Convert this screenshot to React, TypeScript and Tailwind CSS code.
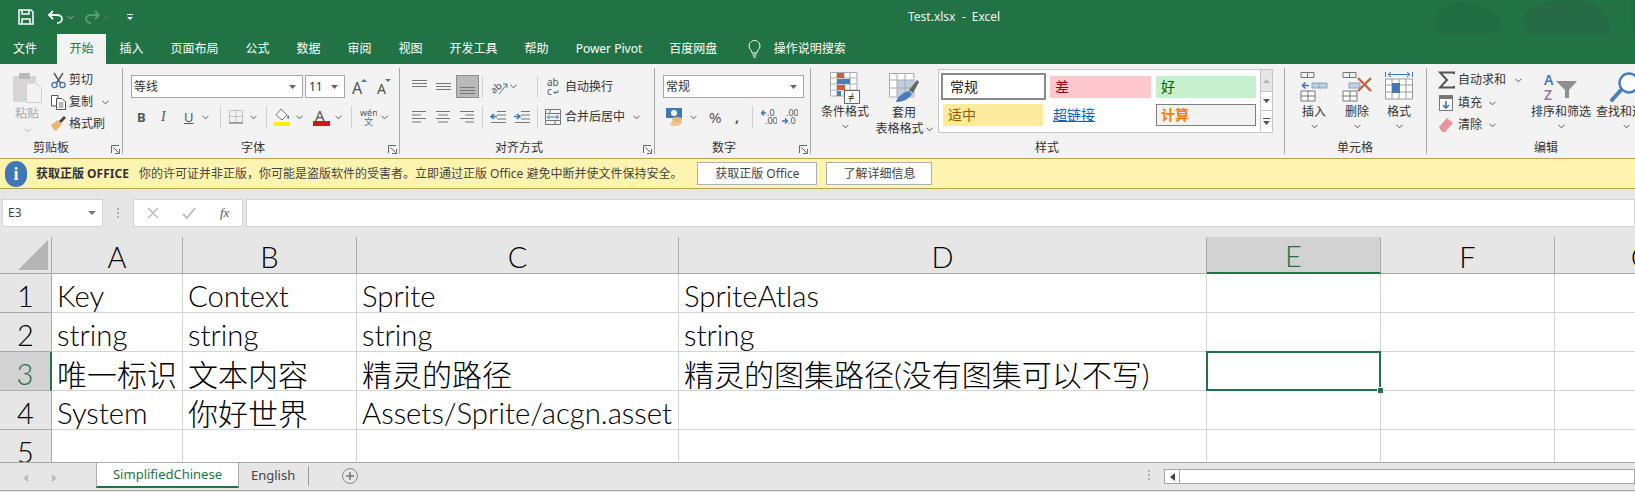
import React from "react";

const Chev = ({ className = "" }: { className?: string }) => (
  <svg width="7" height="5" viewBox="0 0 7 5" fill="none" stroke="#555" strokeWidth="1" className={`shrink-0 ${className}`}>
    <path d="M.5 .8 3.5 3.8 6.5 .8" />
  </svg>
);

const Launcher = () => (
  <svg width="9" height="9" viewBox="0 0 9 9" fill="none" stroke="#666" className="absolute right-[2px] bottom-0">
    <path d="M.5 8V.5H8M2.5 2.5 7.5 7.5M4 8.5H8.5V4" />
  </svg>
);

const Sep = ({ className = "" }: { className?: string }) => <div className={`w-px h-[22px] bg-[#cfcfcf] shrink-0 ${className}`} />;

const Lines = ({ ys }: { ys: number[] }) => (
  <svg width="15" height="16" viewBox="0 0 15 16" stroke="#777" className="shrink-0">
    {ys.map((y, i) => (
      <line key={i} x1="0" x2="15" y1={y + 0.5} y2={y + 0.5} />
    ))}
  </svg>
);

const AlignLines = ({ mode }: { mode: "l" | "c" | "r" }) => {
  const rows = [
    [0, 14],
    [mode === "l" ? 0 : mode === "c" ? 2 : 5, mode === "l" ? 9 : mode === "c" ? 12 : 14],
    [0, 14],
    [mode === "l" ? 0 : mode === "c" ? 2 : 5, mode === "l" ? 9 : mode === "c" ? 12 : 14],
  ];
  return (
    <svg width="15" height="14" viewBox="0 0 15 14" stroke="#777" className="shrink-0">
      {rows.map((r, i) => (
        <line key={i} x1={r[0]} x2={r[1]} y1={1.5 + i * 3.5} y2={1.5 + i * 3.5} />
      ))}
    </svg>
  );
};

const Indent = ({ flip }: { flip?: boolean }) => (
  <svg width="16" height="14" viewBox="0 0 16 14" fill="none" className="shrink-0">
    <path d="M7 1.5H16M7 5H16M7 9H16M1 12.5H16" stroke="#777" />
    <path d={flip ? "M0 6.5H5M3 4 6 6.5 3 9" : "M7 6.5H1M4 4 1 6.5 4 9"} stroke="#3f78b5" strokeWidth="1.6" />
  </svg>
);

const DecIcon = ({ up }: { up?: boolean }) => (
  <svg width="16" height="18" viewBox="0 0 16 18" className="shrink-0">
    <text x={up ? 4 : 6} y="8" fontSize="9" fill="#555">{up ? ".00" : ".0"}</text>
    <text x={up ? 6 : 4} y="16" fontSize="9" fill="#555">{up ? ".0" : ".00"}</text>
    <path d={up ? "M0 13H5M3 10.5 5.5 13 3 15.5" : "M5 5H.8M3 2.5.5 5 3 7.5"} stroke="#3f78b5" strokeWidth="1.3" fill="none" />
  </svg>
);

const SmallBtn = ({ icon, text, chev, chevClass = "ml-[7px]" }: { icon: React.ReactNode; text: string; chev?: boolean; chevClass?: string }) => (
  <div className="flex items-center h-[22px]">
    <div className="w-[18px] flex justify-center shrink-0">{icon}</div>
    <span className="ml-[2px] whitespace-nowrap">{text}</span>
    {chev && <Chev className={chevClass} />}
  </div>
);

const CellsTable = ({ x, y }: { x: number; y: number }) => (
  <path d={`M${x} ${y}h14v10h-14zM${x + 7} ${y}v10M${x} ${y + 5}h14`} fill="#fff" stroke="#777" />
);

const Group = ({ width, label, launcher, labelClass = "justify-center", children }: { width: string; label: string; launcher?: boolean; labelClass?: string; children: React.ReactNode }) => (
  <div className={`relative flex flex-col h-[86px] border-r border-[#a9a9a9] shrink-0 ${width}`}>
    <div className="h-[72px]">{children}</div>
    <div className={`flex h-[14px] leading-[16px] ${labelClass}`}>{label}</div>
    {launcher && <Launcher />}
  </div>
);

const Combo = ({ text, className }: { text: string; className: string }) => (
  <div className={`flex items-center justify-between h-[23px] bg-white border border-[#a6a6a6] pl-[2px] pr-[6px] ${className}`}>
    <span>{text}</span>
    <svg width="7" height="4" viewBox="0 0 7 4" fill="#666"><path d="M0 0H7L3.500 4z" /></svg>
  </div>
);

const BigCol = ({ icon, label, className }: { icon: React.ReactNode; label: string; className: string }) => (
  <div className={`flex flex-col items-center shrink-0 ${className}`}>
    <div className="h-[30px] mt-[4px] flex items-start">{icon}</div>
    <span className="mt-[2px] leading-[16px] whitespace-nowrap">{label}</span>
    <Chev className="mt-[4px]" />
  </div>
);

const tabs = ["文件", "开始", "插入", "页面布局", "公式", "数据", "审阅", "视图", "开发工具", "帮助", "Power Pivot", "百度网盘"];

const cols = ["A", "B", "C", "D", "E", "F", "G"];
const rows: string[][] = [
  ["Key", "Context", "Sprite", "SpriteAtlas"],
  ["string", "string", "string", "string"],
  ["唯一标识", "文本内容", "精灵的路径", "精灵的图集路径(没有图集可以不写)"],
  ["System", "你好世界", "Assets/Sprite/acgn.asset", ""],
  ["", "", "", ""],
];
const gridCols = "grid-cols-[52px_131px_174px_322px_528px_174px_174px_174px]";

const Ribbon = () => (
  <div className="flex h-[94px] pt-[4px] bg-[#f3f3f3] text-[#333] text-xs leading-[16px]">
    <Group width="w-[123px]" label="剪贴板" launcher labelClass="justify-start pl-[33px]">
      <div className="flex">
        <div className="ml-[12px] mt-[4px] w-[30px] flex flex-col items-center text-[#a8a8a8]">
          <svg width="29" height="31" viewBox="0 0 29 31">
            <rect x="0" y="4" width="23" height="26" rx="1" fill="#d8d5d6" />
            <rect x="6" y="1" width="11" height="6" fill="#bdb9ba" />
            <path d="M13.500 11H23L28.500 16.500V30.500H13.500z" fill="#f5f2f6" stroke="#cfcbd0" />
          </svg>
          <span className="mt-[3px]">粘贴</span>
          <Chev className="mt-[6px] opacity-40" />
        </div>
        <div className="ml-[7px] mt-0 flex flex-col pt-[1px]">
          <SmallBtn
            text="剪切"
            icon={
              <svg width="15" height="17" viewBox="0 0 15 17" fill="none">
                <path d="M3 1 10 12M12 1 5 12" stroke="#555" strokeWidth="1.4" />
                <circle cx="3.500" cy="13" r="2.600" stroke="#3f78b5" strokeWidth="1.300" />
                <circle cx="11.500" cy="13" r="2.600" stroke="#3f78b5" strokeWidth="1.300" />
              </svg>
            }
          />
          <SmallBtn
            text="复制"
            chev
            chevClass="ml-[9px]"
            icon={
              <svg width="15" height="15" viewBox="0 0 15 15" fill="#fff" stroke="#555">
                <path d="M.5 .5H7V11H.5z" />
                <path d="M5.500 3.500H11L14.500 7V14.500H5.500z" />
                <path d="M7.500 8H12.500M7.500 10H12.500M7.500 12H12.500" stroke="#777" />
              </svg>
            }
          />
          <SmallBtn
            text="格式刷"
            icon={
              <svg width="16" height="16" viewBox="0 0 16 16">
                <path d="M1 9 8 4 12 8 6 15C4 14 2 12 1 9z" fill="#e9b873" />
                <path d="M9 5 14 0 16 2 11 7z" fill="#444" />
              </svg>
            }
          />
        </div>
      </div>
    </Group>

    <Group width="w-[277px]" label="字体" launcher labelClass="justify-start pl-[118px]">
      <div className="flex items-center pt-[7px]">
        <Combo text="等线" className="ml-[8px] w-[172px]" />
        <Combo text="11" className="ml-[2px] w-[40px] pl-[3px]" />
        <svg width="16" height="16" viewBox="0 0 16 16" className="ml-[7px]">
          <text x="0" y="15" fontSize="16" fill="#555">A</text>
          <path d="M9 3 12 0 15 3z" fill="#3f78b5" />
        </svg>
        <svg width="14" height="16" viewBox="0 0 14 16" className="ml-[9px]">
          <text x="0" y="15" fontSize="14" fill="#555">A</text>
          <path d="M8 0H14L11 3z" fill="#3f78b5" />
        </svg>
      </div>
      <div className="flex items-center h-[22px] mt-[8px]">
        <span className="ml-[14px] w-[9px] font-bold text-[13px] text-[#555]">B</span>
        <span className="ml-[15px] w-[9px] italic font-['Liberation_Serif',serif] text-[14px] text-[#555]">I</span>
        <span className="ml-[14px] w-[9px] underline text-[13px] text-[#555]">U</span>
        <Chev className="ml-[9px]" />
        <Sep className="ml-[11px]" />
        <svg width="14" height="14" viewBox="0 0 14 14" fill="none" stroke="#999" strokeDasharray="1 1" className="ml-[8px]">
          <path d="M.5 .5H13.500V12.500H.5zM7 .5V12.500M.5 6.500H13.500" />
          <path d="M0 13H14" stroke="#666" strokeDasharray="none" />
        </svg>
        <Chev className="ml-[7px]" />
        <Sep className="ml-[9px]" />
        <svg width="16" height="18" viewBox="0 0 16 18" className="ml-[7px]">
          <path d="M7 1 13 7 8 12 2 7z" fill="#fff" stroke="#777" />
          <path d="M14 7c1.500 2 1.500 3 0 4-1-1-1-2 0-4z" fill="#3f78b5" />
          <rect x="0" y="14" width="16" height="4" fill="#f7f000" />
        </svg>
        <Chev className="ml-[6px]" />
        <svg width="17" height="18" viewBox="0 0 17 18" className="ml-[10px]">
          <text x="2" y="13" fontSize="15" fill="#555">A</text>
          <rect x="0" y="13" width="17" height="5" fill="#d9101c" />
        </svg>
        <Chev className="ml-[5px]" />
        <Sep className="ml-[9px]" />
        <svg width="17" height="18" viewBox="0 0 17 18" className="ml-[8px]">
          <text x="0" y="8" fontSize="9" fill="#555">wén</text>
          <text x="4" y="17" fontSize="9" fill="#3f78b5">文</text>
        </svg>
        <Chev className="ml-[4px]" />
      </div>
    </Group>

    <Group width="w-[255px]" label="对齐方式" launcher labelClass="justify-start pl-[95px]">
      <div className="flex items-center pt-[7px] h-[30px]">
        <div className="ml-[12px]"><Lines ys={[1, 4, 7]} /></div>
        <div className="ml-[9px]"><Lines ys={[4, 7, 10]} /></div>
        <div className="ml-[5px] w-[23px] h-[23px] bg-[#b9b9b9] border border-[#8e8e8e] flex items-end justify-center pb-[1px]">
          <Lines ys={[7, 10, 13]} />
        </div>
        <Sep className="ml-[3px]" />
        <svg width="18" height="17" viewBox="0 0 18 17" className="ml-[7px]">
          <text x="0" y="14" fontSize="10" fill="#555" transform="rotate(-40 5 10)">ab</text>
          <path d="M9 16 17 6M13 6H17V10" stroke="#3f78b5" fill="none" />
        </svg>
        <Chev className="ml-[2px]" />
        <Sep className="ml-[20px]" />
        <svg width="13" height="18" viewBox="0 0 13 18" className="ml-[9px]">
          <text x="0" y="8" fontSize="10" fill="#555">ab</text>
          <text x="0" y="17" fontSize="10" fill="#555">c</text>
          <path d="M11 12V14.500H7M8.500 13 7 14.500 8.500 16" stroke="#3f78b5" fill="none" />
        </svg>
        <span className="ml-[5px] whitespace-nowrap">自动换行</span>
      </div>
      <div className="flex items-center h-[22px] mt-[8px]">
        <div className="ml-[12px]"><AlignLines mode="l" /></div>
        <div className="ml-[9px]"><AlignLines mode="c" /></div>
        <div className="ml-[9px]"><AlignLines mode="r" /></div>
        <Sep className="ml-[7px]" />
        <div className="ml-[7px]"><Indent /></div>
        <div className="ml-[8px]"><Indent flip /></div>
        <Sep className="ml-[7px]" />
        <svg width="16" height="16" viewBox="0 0 16 16" fill="none" className="ml-[7px] shrink-0">
          <path d="M.5 .5H15.500V15.500H.5zM.5 4.500H15.500M.5 11.500H15.500M5 .5V4.500M10 11.500V15.500" stroke="#777" />
          <path d="M2.500 8H13.500M4.500 6 2.500 8 4.500 10M11.500 6 13.500 8 11.500 10" stroke="#3f78b5" />
        </svg>
        <span className="ml-[4px] whitespace-nowrap">合并后居中</span>
        <Chev className="ml-[8px]" />
      </div>
    </Group>

    <Group width="w-[156px]" label="数字" launcher labelClass="justify-start pl-[57px]">
      <div className="pt-[7px]">
        <Combo text="常规" className="ml-[8px] w-[141px]" />
      </div>
      <div className="flex items-center h-[22px] mt-[8px]">
        <svg width="17" height="18" viewBox="0 0 17 18" className="ml-[11px] shrink-0">
          <rect x="0" y="0" width="16" height="10" fill="#3f78b5" />
          <circle cx="8" cy="5" r="3" fill="#fff" />
          <ellipse cx="11" cy="11" rx="5" ry="2" fill="#eab676" />
          <ellipse cx="11" cy="14" rx="5" ry="2" fill="#eab676" />
          <ellipse cx="9" cy="16" rx="5" ry="2" fill="#f0c795" />
        </svg>
        <Chev className="ml-[7px]" />
        <span className="ml-[12px] w-[14px] text-[15px] text-[#555]">%</span>
        <span className="ml-[12px] w-[6px] font-bold text-[14px] text-[#555]">,</span>
        <Sep className="ml-[11px]" />
        <div className="ml-[8px]"><DecIcon /></div>
        <div className="ml-[5px]"><DecIcon up /></div>
      </div>
    </Group>

    <Group width="w-[474px]" label="样式" labelClass="justify-start pl-[224px]">
      <div className="flex">
        <BigCol
          className="ml-[9px] w-[50px]"
          label="条件格式"
          icon={
            <svg width="30" height="32" viewBox="0 0 30 32" fill="none">
              <path d="M.5 .5H27V24H.5zM7 .5V24M.5 6H27M.5 12H27M.5 18H27M14 .5V24M20 .5V24" stroke="#aaa" fill="#fff" />
              <rect x="7" y="1" width="7" height="5" fill="#c8603f" />
              <rect x="7" y="7" width="13" height="5" fill="#4a7ebb" />
              <rect x="7" y="13" width="8" height="5" fill="#c8603f" />
              <rect x="7" y="19" width="4" height="5" fill="#4a7ebb" />
              <rect x="14.500" y="18.500" width="15" height="13" fill="#fff" stroke="#666" />
              <text x="18" y="29" fontSize="11" fill="#444">≠</text>
            </svg>
          }
        />
        <div className="ml-[4px] w-[60px] flex flex-col items-center shrink-0">
          <svg width="30" height="30" viewBox="0 0 30 30" fill="none" className="mt-[5px]">
            <path d="M.5 .5H25V24H.5z" fill="#fff" stroke="#aaa" />
            <rect x="8" y="7" width="17" height="17" fill="#bfcfe1" />
            <path d="M8 .5V24M16 .5V24M.5 7H25M.5 15H25" stroke="#aaa" />
            <path d="M20 17 28 7 30 9 24 20z" fill="#666" />
            <path d="M7 29C8 24 13 20 20 18L23 21C20 26 14 29 7 29z" fill="#4a7ebb" />
          </svg>
          <span className="mt-[2px] leading-[16px]">套用</span>
          <div className="flex items-center whitespace-nowrap">
            <span>表格格式</span>
            <Chev className="ml-[2px]" />
          </div>
        </div>
        <div className="relative ml-[4px] mt-[1px] w-[335px] h-[64px] bg-white border border-[#c6c6c6] flex text-[14px]">
          <div className="w-[321px] grid grid-cols-[113px_104px_104px] grid-rows-[32px_31px]">
            <div className="ml-[2px] mt-[3px] w-[105px] h-[27px] border-2 border-[#8a8a8a] flex items-center pl-[7px] text-[#222]">常规</div>
            <div className="ml-[-2px] mt-[6px] w-[101px] h-[22px] bg-[#ffc7ce] flex items-center pl-[5px] text-[#9c0006]">差</div>
            <div className="mt-[6px] w-[100px] h-[22px] bg-[#c6efce] flex items-center pl-[5px] text-[#006100]">好</div>
            <div className="ml-[4px] mt-[2px] w-[100px] h-[22px] bg-[#ffeb9c] flex items-center pl-[5px] text-[#9c5700]">适中</div>
            <div className="ml-[1px] mt-[2px] h-[22px] flex items-center text-[#0563c1] underline">超链接</div>
            <div className="mt-[2px] w-[100px] h-[22px] bg-[#f2f2f2] border border-[#7f7f7f] flex items-center pl-[4px] font-bold text-[#fa7d00]">计算</div>
          </div>
          <div className="w-[14px] flex flex-col border-l border-[#c6c6c6] ml-auto">
            <div className="h-[21px] bg-[#e6e6e6] flex items-center justify-center">
              <svg width="7" height="4" viewBox="0 0 7 4" fill="#b5b5b5"><path d="M0 4H7L3.500 0z" /></svg>
            </div>
            <div className="h-[20px] border-y border-[#c6c6c6] flex items-center justify-center">
              <svg width="7" height="4" viewBox="0 0 7 4" fill="#555"><path d="M0 0H7L3.500 4z" /></svg>
            </div>
            <div className="flex-1 flex flex-col gap-[2px] items-center justify-center">
              <div className="w-[7px] h-px bg-[#555]" />
              <svg width="7" height="4" viewBox="0 0 7 4" fill="#555"><path d="M0 0H7L3.500 4z" /></svg>
            </div>
          </div>
        </div>
      </div>
    </Group>

    <Group width="w-[142px]" label="单元格" labelClass="justify-start pl-[52px]">
      <div className="flex">
        <BigCol
          className="ml-[15px] w-[28px]"
          label="插入"
          icon={
            <svg width="28" height="30" viewBox="0 0 28 30" fill="none">
              <path d="M1 .5H14V5.500H1zM7.500 .5V5.500" stroke="#777" />
              <path d="M12 11H27V16H12zM19 11V16" fill="#bfcfe1" stroke="#8aa3bf" />
              <path d="M9 13.500H3M5.500 10.500 2.500 13.500 5.500 16.500" stroke="#3f78b5" strokeWidth="1.600" />
              <CellsTable x={1} y={19} />
            </svg>
          }
        />
        <BigCol
          className="ml-[14px] w-[30px]"
          label="删除"
          icon={
            <svg width="30" height="30" viewBox="0 0 30 30" fill="none">
              <path d="M1 .5H14V5.500H1zM7.500 .5V5.500" stroke="#777" />
              <path d="M7 11H18V16H7z" fill="#bfcfe1" stroke="#8aa3bf" />
              <CellsTable x={1} y={19} />
              <path d="M16 6 29 19M29 6 16 19" stroke="#c8603f" strokeWidth="2.200" />
            </svg>
          }
        />
        <BigCol
          className="ml-[13px] w-[28px]"
          label="格式"
          icon={
            <svg width="28" height="30" viewBox="0 0 28 30" fill="none">
              <path d="M.5 0V5M27.500 0V5M3 2.500H25M6 0 3 2.500 6 5M22 0 25 2.500 22 5" stroke="#3f78b5" />
              <path d="M.5 7H27.500V27H.5zM7 7V27M14 7V27M21 7V27M.5 13H27.500M.5 20H27.500" stroke="#999" fill="#fff" />
              <rect x="7" y="11" width="8" height="10" fill="#3f78b5" />
            </svg>
          }
        />
      </div>
    </Group>

    <Group width="w-[207px] border-r-0" label="编辑" labelClass="justify-start pl-[107px]">
      <div className="flex">
        <div className="ml-[11px] flex flex-col w-[90px]">
          <div className="flex items-center h-[22px] mt-[1px]">
            <svg width="17" height="18" viewBox="0 0 17 18" fill="none" className="shrink-0">
              <path d="M16 3V1.500H2L9 9 2 16.500H16V15" stroke="#555" strokeWidth="2" />
            </svg>
            <span className="ml-[3px] whitespace-nowrap">自动求和</span>
            <Chev className="ml-[9px]" />
          </div>
          <div className="flex items-center h-[22px] mt-[1px]">
            <svg width="14" height="16" viewBox="0 0 14 16" fill="none" className="ml-px shrink-0">
              <rect x=".5" y=".5" width="13" height="15" fill="#fff" stroke="#777" />
              <rect x="1" y="1" width="12" height="3" fill="#777" />
              <path d="M7 6V13M4 10 7 13 10 10" stroke="#3f78b5" strokeWidth="1.600" />
            </svg>
            <span className="ml-[5px] whitespace-nowrap">填充</span>
            <Chev className="ml-[7px]" />
          </div>
          <div className="flex items-center h-[22px]">
            <svg width="14" height="14" viewBox="0 0 14 14" className="ml-px shrink-0">
              <path d="M0 9 8 0 14 5 6 14H3z" fill="#e8939e" />
            </svg>
            <span className="ml-[5px] whitespace-nowrap">清除</span>
            <Chev className="ml-[7px]" />
          </div>
        </div>
        <BigCol
          className="ml-[9px] w-[60px]"
          label="排序和筛选"
          icon={
            <svg width="34" height="30" viewBox="0 0 34 30" fill="none">
              <text x="0" y="13" fontSize="14" fill="#3f78b5" fontWeight="600">A</text>
              <text x="0" y="28" fontSize="14" fill="#a672b3" fontWeight="600">Z</text>
              <path d="M12 9H33L25 18V26H21V18z" fill="#8f8f8f" />
            </svg>
          }
        />
        <BigCol
          className="ml-[5px] w-[60px]"
          label="查找和选择"
          icon={
            <svg width="32" height="30" viewBox="0 0 32 30" fill="none">
              <circle cx="19" cy="11" r="9.500" stroke="#4a7ebb" strokeWidth="2.400" fill="#fff" />
              <path d="M11 18 2 28" stroke="#4a7ebb" strokeWidth="4" strokeLinecap="round" />
            </svg>
          }
        />
      </div>
    </Group>
  </div>
);

export default function App() {
  return (
    <div className="h-[492px] w-[1635px] overflow-hidden flex flex-col bg-white font-['Noto_Sans','Noto_Sans_CJK_SC',sans-serif] text-xs">
      {/* title bar */}
      <div className="relative h-[34px] bg-[#217346] text-white flex items-center shrink-0">
        <svg width="16" height="16" viewBox="0 0 16 16" fill="none" stroke="#fff" strokeWidth="1.500" className="ml-[18px]">
          <path d="M1 1H13L15 3V15H1zM4 1V5H11V1M4 15V10H12V15" />
        </svg>
        <svg width="15" height="14" viewBox="0 0 15 14" fill="none" stroke="#fff" strokeWidth="1.800" className="ml-[14px]">
          <path d="M1 5H9C12 5 14 7 14 9S12 13 9 13M5 1 1 5 5 9" />
        </svg>
        <Chev className="ml-[4px] invert" />
        <svg width="15" height="14" viewBox="0 0 15 14" fill="none" stroke="#5c9a7a" strokeWidth="1.800" className="ml-[11px]">
          <path d="M14 5H6C3 5 1 7 1 9S3 13 6 13M10 1 14 5 10 9" />
        </svg>
        <Chev className="ml-[4px] opacity-30 invert" />
        <svg width="6" height="6" viewBox="0 0 6 6" fill="#fff" className="ml-[16px]">
          <path d="M0 0H6V1H0zM0 3H6L3 6z" />
        </svg>
        <span className="ml-[775px] whitespace-pre text-[#f0f5f2]">Test.xlsx  -  Excel</span>
        <svg width="235" height="64" viewBox="0 0 235 64" className="absolute top-0 right-0">
          <path d="M35 20C35 8 48 2 62 3 76 4 92 8 100 18 103 26 100 32 85 35 70 38 50 38 35 40z" fill="#206d43" />
          <path d="M124 20C124 6 150 0 170 0 190 1 208 10 209 26 209 36 208 42 208 48 190 44 160 50 140 49 130 48 122 44 120 40 126 38 124 30 124 20z" fill="#256b47" />
          <path d="M232 0C228 10 234 30 231 44L235 45V0z" fill="#256b47" />
        </svg>
      </div>

      {/* tabs */}
      <div className="relative h-[30px] bg-[#217346] text-white flex shrink-0 pl-0">
        {tabs.map((t) => (
          <div
            key={t}
            className={
              t === "开始"
                ? "w-[49px] flex items-center justify-center bg-[#f3f3f3] text-[#217346] ml-[7px]"
                : t === "文件"
                ? "w-[50px] flex items-center justify-center"
                : "px-[13.500px] flex items-center whitespace-nowrap"
            }
          >
            {t}
          </div>
        ))}
        <svg width="13" height="18" viewBox="0 0 13 18" fill="none" stroke="#fff" className="ml-[17px] self-center">
          <path d="M4 13C4 10 1 9 1 6A5.500 5.500 0 0 1 12 6C12 9 9 10 9 13zM4.500 15H8.500M5 17H8" />
        </svg>
        <span className="ml-[13px] self-center whitespace-nowrap">操作说明搜索</span>
      </div>

      <Ribbon />

      {/* licence warning */}
      <div className="h-[31px] shrink-0 bg-[#fef4b0] border-y border-[#c2a05a] flex items-center text-[#444]">
        <div className="ml-[5px] w-[22px] h-[26px] rounded-full bg-[#3f78b5] flex items-center justify-center text-white font-bold text-[18px] font-['Liberation_Serif',serif]">i</div>
        <span className="ml-[9px] font-bold text-[#333]">获取正版 OFFICE</span>
        <span className="ml-[10px] whitespace-nowrap">你的许可证并非正版，你可能是盗版软件的受害者。立即通过正版 Office 避免中断并使文件保持安全。</span>
        <div className="ml-[15px] w-[120px] h-[23px] bg-white border border-[#b0b0b0] flex items-center justify-center">获取正版 Office</div>
        <div className="ml-[9px] w-[106px] h-[23px] bg-white border border-[#b0b0b0] flex items-center justify-center">了解详细信息</div>
      </div>

      {/* formula bar */}
      <div className="h-[48px] shrink-0 bg-[#e6e6e6] pt-[10px] flex items-start text-[#444]">
        <div className="ml-[2px] w-[101px] h-[28px] bg-white border border-[#d4d4d4] flex items-center justify-between pl-[5px] pr-[6px]">
          <span>E3</span>
          <svg width="8" height="4" viewBox="0 0 8 4" fill="#777"><path d="M0 0H8L4 4z" /></svg>
        </div>
        <div className="ml-[14px] mt-[9px] w-[2px] flex flex-col gap-[2px]">
          <div className="h-[2px] bg-[#b0b0b0]" />
          <div className="h-[2px] bg-[#b0b0b0]" />
          <div className="h-[2px] bg-[#b0b0b0]" />
        </div>
        <div className="ml-[14px] w-[110px] h-[28px] bg-white border border-[#d4d4d4] flex items-center">
          <svg width="12" height="12" viewBox="0 0 12 12" stroke="#bdbdbd" strokeWidth="1.500" className="ml-[13px]"><path d="M1 1 11 11M11 1 1 11" /></svg>
          <svg width="14" height="12" viewBox="0 0 14 12" fill="none" stroke="#bdbdbd" strokeWidth="1.800" className="ml-[23px]"><path d="M1 7 5 11 13 1" /></svg>
          <span className="ml-[24px] italic font-['Liberation_Serif',serif] text-[13px] text-[#555]">fx</span>
        </div>
        <div className="ml-[3px] flex-1 h-[28px] bg-white border border-[#d4d4d4]" />
      </div>

      {/* sheet */}
      <div className="h-[225px] shrink-0 overflow-hidden font-['Lato','Noto_Sans_CJK_SC',sans-serif] text-black">
        <div className={`grid ${gridCols} grid-rows-[37px_39px_39px_39px_39px_39px] h-[232px]`}>
          <div className="bg-[#e6e6e6] border-r border-b border-[#ababab] relative">
            <svg width="30" height="30" viewBox="0 0 30 30" className="absolute right-[3px] bottom-[3px]"><path d="M30 0V30H0z" fill="#b4b4b4" /></svg>
          </div>
          {cols.map((c) => (
            <div
              key={c}
              className={
                c === "E"
                  ? "bg-[#d2d2d2] border-r border-[#ababab] border-b-2 border-b-[#217346] text-[#217346] flex items-center justify-center pt-[4px] text-[29px] font-light"
                  : "bg-[#e6e6e6] border-r border-b border-[#ababab] flex items-center justify-center pt-[4px] text-[29px] font-light"
              }
            >
              {c}
            </div>
          ))}
          {rows.map((r, i) => (
            <React.Fragment key={i}>
              <div
                className={
                  i === 2
                    ? "bg-[#d2d2d2] border-r-2 border-[#217346] border-b border-b-[#ababab] flex items-center justify-center pt-[6px] text-[29px] font-light text-[#217346]"
                    : "bg-[#e6e6e6] border-r border-b border-[#ababab] flex items-center justify-center pt-[6px] text-[29px] font-light"
                }
              >
                {i + 1}
              </div>
              {r.map((v, j) => (
                <div
                  key={j}
                  className={
                    /[\u4e00-\u9fff]/.test(v)
                      ? "border-r border-b border-[#d4d4d4] pl-[5px] pt-[6px] flex items-center whitespace-nowrap text-[30px] leading-none font-light"
                      : "border-r border-b border-[#d4d4d4] pl-[5px] pt-[6px] flex items-center whitespace-nowrap text-[29.300px] leading-none font-light"
                  }
                >
                  {v}
                </div>
              ))}
              <div className={i === 2 ? "relative border-r border-b border-[#d4d4d4]" : "border-r border-b border-[#d4d4d4]"}>
                {i === 2 && (
                  <>
                    <div className="absolute -left-px -top-px w-[175px] h-[40px] border-2 border-[#217346]" />
                    <div className="absolute right-[-3px] bottom-[-3px] w-[5px] h-[5px] bg-[#217346] border-t border-l border-white box-content" />
                  </>
                )}
              </div>
              <div className="border-r border-b border-[#d4d4d4]" />
              <div className="border-b border-[#d4d4d4]" />
            </React.Fragment>
          ))}
        </div>
      </div>

      {/* sheet tabs */}
      <div className="h-[29px] shrink-0 bg-[#e6e6e6] border-y border-[#ababab] flex items-start text-[#444]">
        <svg width="5" height="8" viewBox="0 0 5 8" fill="#bbb" className="ml-[23px] mt-[11px]"><path d="M5 0V8L0 4z" /></svg>
        <svg width="5" height="8" viewBox="0 0 5 8" fill="#bbb" className="ml-[24px] mt-[11px]"><path d="M0 0V8L5 4z" /></svg>
        <div className="ml-[39px] w-[143px] h-[25px] pt-[1px] bg-white border-x border-[#ababab] border-b-2 border-b-[#217346] text-[#217346] text-[13px] flex items-center justify-center">SimplifiedChinese</div>
        <span className="ml-[12px] mt-[4px] w-[44px] text-[13px]">English</span>
        <div className="ml-[13px] mt-[3px] w-px h-[20px] bg-[#9a9a9a]" />
        <div className="ml-[33px] mt-[5px] w-[16px] h-[16px] rounded-full border border-[#8a8a8a] flex items-center justify-center">
          <svg width="8" height="8" viewBox="0 0 8 8" stroke="#777" strokeWidth="1.500"><path d="M4 0V8M0 4H8" /></svg>
        </div>
        <div className="ml-[790px] mt-[7px] w-[2px] flex flex-col gap-[2px]">
          <div className="h-[2px] bg-[#b0b0b0]" />
          <div className="h-[2px] bg-[#b0b0b0]" />
          <div className="h-[2px] bg-[#b0b0b0]" />
        </div>
        <div className="ml-[14px] mt-[6px] flex-1 h-[15px] bg-white border border-[#a6a6a6] flex">
          <div className="w-[15px] border-r border-[#a6a6a6] flex items-center justify-center">
            <svg width="5" height="8" viewBox="0 0 5 8" fill="#444"><path d="M5 0V8L0 4z" /></svg>
          </div>
        </div>
      </div>
      <div className="flex-1 bg-[#e6e6e6]" />
    </div>
  );
}
